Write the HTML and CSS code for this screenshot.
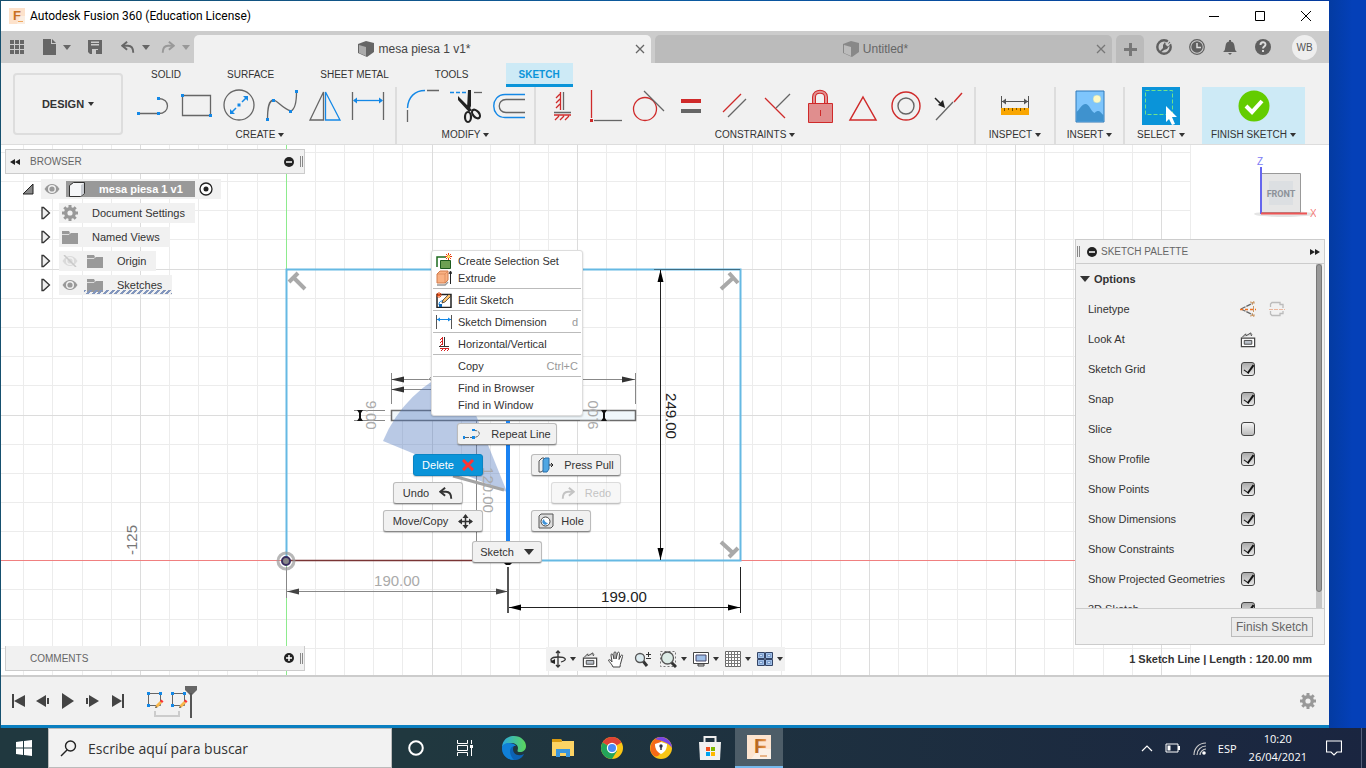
FILE: index.html
```html
<!DOCTYPE html>
<html lang="en">
<head>
  <meta charset="UTF-8">
  <title>Autodesk Fusion 360 (Education License)</title>
  <meta name="viewport" content="width=device-width, initial-scale=1">
  <link rel="stylesheet" href="styles.css">
</head>
<body>
  <!-- shared icons -->
  <svg class="sprite" aria-hidden="true">
    <symbol id="i-eye" viewBox="0 0 16 12"><path d="M0.5 6C3 2 5.500 1 8 1s5 1 7.500 5C13 10 10.500 11 8 11S3 10 .5 6z" fill="#999"/><circle cx="8" cy="6" r="4" fill="#f1f1f1"/><circle cx="8" cy="6" r="2.600" fill="#999"/></symbol>
    <symbol id="i-folder" viewBox="0 0 16 13"><path d="M0 0h7l1 2h8v11H0z" fill="#999"/><path d="M0 3.500h7l1.500-1.500" stroke="#ddd" fill="none"/></symbol>
    <symbol id="i-gear" viewBox="0 0 16 16"><circle cx="8" cy="8" r="4.300" fill="none" stroke="#999" stroke-width="3.400"/><path d="M8 0v3M8 13v3M0 8h3M13 8h3M2.300 2.300l2.200 2.200M11.500 11.500l2.200 2.200M2.300 13.700l2.200-2.200M11.500 4.500l2.200-2.200" stroke="#999" stroke-width="3"/></symbol>
    <symbol id="i-tri" viewBox="0 0 10 14"><path d="M1 1.500h1.500L8.500 7l-6 5.500H1z" fill="#eee" stroke="#333" stroke-width="1.300"/></symbol>
    <symbol id="i-undo" viewBox="0 0 16 14"><path d="M2 5h6c4 0 6 3 6 8" fill="none" stroke="currentColor" stroke-width="2.200"/><path d="M7 .5L1.500 5 7 9.500" fill="none" stroke="currentColor" stroke-width="2.200"/></symbol>
    <symbol id="i-lookat" viewBox="0 0 18 18"><path d="M1.500 7.500h14v9h-14z" fill="#fff" stroke="#444" stroke-width="1.300"/><path d="M4.500 10h8v4h-8z" fill="#b9c0c9" stroke="#444"/><path d="M2 7l4-4 .5 2 5-3 .5 3 1-1" fill="#ccc" stroke="#444"/></symbol>
    <symbol id="i-feature" viewBox="0 0 18 18"><path d="M2.500 2.500h12v12h-12z" fill="none" stroke="#666"/><path d="M1 1h3v3H1zM13 1h3v3h-3zM1 13h3v3H1z" fill="#1488e6"/><path d="M9 17l1-3 4-4 2 2-4 4z" fill="#f9b74a"/><path d="M14 10l1.500-1.500 2 2L16 12z" fill="#f33"/><path d="M9 17l1-2 1.500 1.500z" fill="#555"/></symbol>
  </svg>

  <div class="desktop">
    <div class="window">
      <header class="titlebar">
        <svg width="16" height="16" viewBox="0 0 16 16"><rect width="16" height="16" fill="#fde2cb"/><path d="M11 8h5v8H8z" fill="#fbeee2"/><text x="4" y="12" font-family="Liberation Sans" font-weight="700" font-size="13" fill="#c9711f">F</text><path d="M9 13h5v1H9z" fill="#f0a860"/></svg>
        <h1 class="title">Autodesk Fusion 360 (Education License)</h1>
        <button class="win-btn" aria-label="Minimize"><svg width="12" height="12"><path d="M1 6.500h10" stroke="#000"/></svg></button>
        <button class="win-btn" aria-label="Maximize"><svg width="12" height="12"><path d="M1.500 1.500h9v9h-9z" fill="none" stroke="#000"/></svg></button>
        <button class="win-btn" aria-label="Close"><svg width="12" height="12"><path d="M1 1l10 10M11 1L1 11" stroke="#000"/></svg></button>
      </header>

      <div class="appbar">
        <div class="quick">
          <button aria-label="Data panel"><svg width="14" height="14"><path d="M0 0h4v4H0zM5 0h4v4H5zM10 0h4v4h-4zM0 5h4v4H0zM5 5h4v4H5zM10 5h4v4h-4zM0 10h4v4H0zM5 10h4v4H5zM10 10h4v4h-4z" fill="#666"/></svg></button>
          <button class="wide" aria-label="File"><svg width="13" height="16"><path d="M0 0h8v5h5v11H0zM9 0l4 4H9z" fill="#666"/></svg><span class="caret"></span></button>
          <button aria-label="Save"><svg width="14" height="14"><path d="M0 0h14v14H2l-2-2z" fill="#666"/><path d="M3 1.500h8v4H3zM4 9h6v5H4z" fill="#ccc"/><path d="M8 10h2v4H8zM3 3h8v1H3z" fill="#666"/></svg></button>
          <button class="wide" aria-label="Undo"><svg width="14" height="13"><use href="#i-undo"/></svg><span class="caret"></span></button>
          <button class="wide faded" aria-label="Redo"><svg class="flip" width="14" height="13"><use href="#i-undo"/></svg><span class="caret"></span></button>
        </div>
        <div class="docs">
          <div class="doc active">
            <span class="doc-name"><svg width="16" height="16" viewBox="0 0 16 16"><path d="M0 3l8-3 8 2v9l-7 5-9-4z" fill="#666"/><path d="M1 4l7 2v9l-7-3z" fill="#ababab"/></svg>mesa piesa 1 v1*</span>
            <button aria-label="Close tab"><svg width="10" height="10"><path d="M1 1l8 8M9 1L1 9" stroke="#666" stroke-width="1.300"/></svg></button>
          </div>
          <div class="doc">
            <span class="doc-name"><svg width="16" height="16" viewBox="0 0 16 16"><path d="M0 3l8-3 8 2v9l-7 5-9-4z" fill="#888"/><path d="M1 4l7 2v9l-7-3z" fill="#bbb"/></svg>Untitled*</span>
            <button aria-label="Close tab"><svg width="10" height="10"><path d="M1 1l8 8M9 1L1 9" stroke="#777" stroke-width="1.300"/></svg></button>
          </div>
          <button class="doc-add" aria-label="New tab"><svg width="13" height="13"><path d="M6.500 0v13M0 6.500h13" stroke="#777" stroke-width="3"/></svg></button>
        </div>
        <div class="account">
          <button aria-label="Extensions"><svg width="16" height="16"><circle cx="8" cy="8" r="6.700" fill="none" stroke="#5f5f5f" stroke-width="2.400"/><path d="M3 13l4-4V6l2-3 1 3 3 1-2 3-3 1-4 3z" fill="#5f5f5f"/><path d="M10 6l4-5M11 7l5-4" stroke="#ccc" stroke-width="1.300"/></svg></button>
          <button aria-label="Job status"><svg width="16" height="16"><circle cx="8" cy="8" r="7.300" fill="none" stroke="#5f5f5f" stroke-width="1.200"/><circle cx="8" cy="8" r="5.700" fill="#5f5f5f"/><path d="M8 4v4.500h4" stroke="#ddd" stroke-width="1.500" fill="none"/></svg></button>
          <button aria-label="Notifications"><svg width="16" height="16"><path d="M1 13c2-1 2-3 2.500-6C4 4 5 3 7 2.500V1h2v1.500c2 .5 3 1.500 3.500 4.500.5 3 .5 5 2.500 6zM6 14h4l-2 2z" fill="#5f5f5f"/></svg></button>
          <button aria-label="Help"><svg width="16" height="16"><circle cx="8" cy="8" r="8" fill="#5f5f5f"/><path d="M5.500 6c0-3.500 5-3.500 5-.5 0 2-2.500 2-2.500 4M8 11v2" stroke="#ddd" stroke-width="1.900" fill="none"/></svg></button>
          <button class="avatar">WB</button>
        </div>
      </div>

      <div class="ribbon">
        <button class="workspace">DESIGN <span class="caret"></span></button>
        <div class="ribbon-main">
          <nav class="ribbon-tabs">
            <a href="#">SOLID</a>
            <a href="#">SURFACE</a>
            <a href="#">SHEET METAL</a>
            <a href="#">TOOLS</a>
            <a href="#" class="active">SKETCH</a>
          </nav>
          <div class="groups">
            <section class="group create">
              <div class="tools">
                <button aria-label="Line"><svg width="36" height="36"><path d="M3.500 25.500h20c12 0 12-15 0-15" fill="none" stroke="#666" stroke-width="1.300"/><path d="M2 24h3v3H2zM22 24h3v3h-3zM22 9h3v3h-3z" fill="#1488e6"/></svg></button>
                <button aria-label="Rectangle"><svg width="36" height="36"><path d="M4.500 7.500h28v20h-28z" fill="none" stroke="#666" stroke-width="1.300"/><path d="M3 6h3v3H3zM31 26h3v3h-3z" fill="#1488e6"/></svg></button>
                <button aria-label="Circle"><svg width="36" height="36"><circle cx="18" cy="17" r="15" fill="none" stroke="#666" stroke-width="1.300"/><path d="M10 25l5-5M21 14l5-5" stroke="#1488e6" stroke-width="1.500"/><path d="M9 26v-5l5 5zM27 8v5l-5-5zM16.500 15.500h3v3h-3z" fill="#1488e6"/></svg></button>
                <button aria-label="Spline"><svg width="36" height="36"><path d="M3.500 32c0-12 1-20 6.500-20 5 2 9 9 17 11 4-2 5.500-8 5.500-19" fill="none" stroke="#666" stroke-width="1.300"/><path d="M2 30h3v3H2zM8 11h3v3H8zM25 22h3v3h-3zM31 2h3v3h-3z" fill="#1488e6"/></svg></button>
                <button aria-label="Mirror"><svg width="36" height="36"><path d="M16.500 4v28H3z" fill="none" stroke="#666" stroke-width="1.300"/><path d="M18.500 4v28H33z" fill="none" stroke="#1488e6" stroke-width="1.300"/></svg></button>
                <button aria-label="Sketch Dimension"><svg width="36" height="36"><path d="M2.500 4v28M33.500 4v28" stroke="#666" stroke-width="1.300"/><path d="M4 12.500h28" stroke="#1488e6" stroke-width="1.300"/><path d="M3 12.500l4-3v6zM33 12.500l-4-3v6z" fill="#1488e6"/></svg></button>
              </div>
              <button class="group-name">CREATE <span class="caret"></span></button>
            </section>
            <section class="group">
              <div class="tools">
                <button aria-label="Fillet"><svg width="36" height="36"><path d="M2.500 20C3 9 10 2.500 20 2.500" fill="none" stroke="#1488e6" stroke-width="1.400"/><path d="M22 2.500h12M2.500 22v12" stroke="#666" stroke-width="1.300"/></svg></button>
                <button aria-label="Trim"><svg width="36" height="36"><path d="M2 4.500h17" stroke="#1488e6" stroke-width="1.500" stroke-dasharray="4 2"/><path d="M26 4.500h8" stroke="#666" stroke-width="1.300"/><path d="M20 2h3v16l-2 5-2-2zM10 8l14 14-3 2-11-12z" fill="#222"/><ellipse cx="20" cy="29" rx="3" ry="5" fill="none" stroke="#222" stroke-width="2.200"/><ellipse cx="28" cy="26" rx="3" ry="5" transform="rotate(-40 28 26)" fill="none" stroke="#222" stroke-width="2.200"/></svg></button>
                <button aria-label="Offset"><svg width="36" height="36"><path d="M34 6.500H14c-15 0-15 23 0 23h20" fill="none" stroke="#1488e6" stroke-width="1.400"/><path d="M34 11.500H15c-9 0-9 13 0 13h19" fill="none" stroke="#666" stroke-width="1.300"/></svg></button>
              </div>
              <button class="group-name">MODIFY <span class="caret"></span></button>
            </section>
            <section class="group">
              <div class="tools">
                <button aria-label="Horizontal/Vertical"><svg width="20" height="30"><path d="M8.500 1v18M8 3L4 7M8 8l-4 4M8 13l-4 4M2 24h17M7 25l-4 4M12 25l-4 4M17 25l-4 4" stroke="#cf2a2a" stroke-width="1.300" fill="none"/><path d="M11.500 1v18M2 21.500h17" stroke="#666" stroke-width="1.300"/></svg></button>
                <button aria-label="Coincident"><svg width="36" height="36"><path d="M4.500 2v28" stroke="#cf2a2a" stroke-width="1.300"/><path d="M3 31h3v3H3z" fill="#cf2a2a"/><path d="M7 32.500h28" stroke="#666" stroke-width="1.300"/></svg></button>
                <button aria-label="Tangent"><svg width="36" height="36"><circle cx="15" cy="21" r="11.500" fill="none" stroke="#cf2a2a" stroke-width="1.300"/><path d="M14 3l20 20" stroke="#666" stroke-width="1.300"/></svg></button>
                <button aria-label="Equal"><svg width="36" height="36"><path d="M8 11h20v4H8z" fill="#cf2a2a"/><path d="M8 21h20v4H8z" fill="#666"/></svg></button>
                <button aria-label="Parallel"><svg width="36" height="36"><path d="M7 24L25 6" stroke="#cf2a2a" stroke-width="1.300"/><path d="M12 29l18-18" stroke="#666" stroke-width="1.300"/></svg></button>
                <button aria-label="Perpendicular"><svg width="36" height="36"><path d="M6 10l20 20" stroke="#cf2a2a" stroke-width="1.300"/><path d="M17 20L31 6" stroke="#666" stroke-width="1.300"/></svg></button>
                <button aria-label="Fix"><svg width="36" height="36"><path d="M12 16V9c0-7 12-7 12 0v7" fill="none" stroke="#cf2a2a" stroke-width="4"/><path d="M12 16V9c0-7 12-7 12 0v7" fill="none" stroke="#e39292" stroke-width="2"/><path d="M6.500 15.500h24v19h-24z" fill="#e08e8e" stroke="#cf2a2a"/><path d="M18.500 22v6" stroke="#cf2a2a"/></svg></button>
                <button aria-label="MidPoint"><svg width="36" height="36"><path d="M18 9l13 23H5z" fill="none" stroke="#cf2a2a" stroke-width="1.500"/></svg></button>
                <button aria-label="Concentric"><svg width="36" height="36"><circle cx="18" cy="18" r="14" fill="none" stroke="#cf2a2a" stroke-width="1.400"/><circle cx="18" cy="18" r="8" fill="none" stroke="#666" stroke-width="1.400"/></svg></button>
                <button aria-label="Collinear"><svg width="36" height="36"><path d="M23 14l8-9" stroke="#cf2a2a" stroke-width="1.400"/><path d="M5 32l17-18" stroke="#666" stroke-width="1.300"/><path d="M4 10l5 5" stroke="#222" stroke-width="1.500"/><path d="M14 20l-7-3 5-5z" fill="#222"/></svg></button>
              </div>
              <button class="group-name">CONSTRAINTS <span class="caret"></span></button>
            </section>
            <section class="group inspect">
              <div class="tools">
                <button aria-label="Measure"><svg width="36" height="36"><path d="M4.500 8v12M31.500 8v12M5 13.500h26" stroke="#555"/><path d="M5 13.500l4-3v6zM31 13.500l-4-3v6z" fill="#555"/><path d="M4 20h28v7H4z" fill="#f9a602"/><path d="M7.500 20v3M11.500 20v2M15.500 20v3M19.500 20v2M23.500 20v3M27.500 20v2" stroke="#7a5200"/></svg></button>
              </div>
              <button class="group-name">INSPECT <span class="caret"></span></button>
            </section>
            <section class="group insert">
              <div class="tools">
                <button aria-label="Canvas"><svg width="36" height="36"><path d="M4 3h28v31H4z" fill="#7ec5fc" stroke="#2f79b8"/><path d="M4.500 24c3-2 5-8 9-8s5 7 9 9c2-2 3-2 4-2 2 0 3 3 5 4v6.500h-27z" fill="#3f92ce"/><circle cx="25" cy="11" r="4" fill="#fdf9c4" stroke="#9cc" stroke-width=".5"/></svg></button>
              </div>
              <button class="group-name">INSERT <span class="caret"></span></button>
            </section>
            <section class="group select">
              <div class="tools">
                <button aria-label="Select"><svg width="38" height="38"><path d="M0 0h38v38H0z" fill="#0a94d9"/><path d="M3.500 3.500h27v24h-27z" fill="none" stroke="#6fe28b" stroke-dasharray="4 2"/><path d="M24 19l11 11h-5l3 7-3 1-3-6-3 3z" fill="#fff"/></svg></button>
              </div>
              <button class="group-name">SELECT <span class="caret"></span></button>
            </section>
            <section class="group finish">
              <div class="tools">
                <button aria-label="Finish Sketch"><svg width="36" height="36"><circle cx="18" cy="18" r="15.500" fill="#63cc00"/><path d="M10 18l6 6 10-11" fill="none" stroke="#fff" stroke-width="4"/></svg></button>
              </div>
              <button class="group-name">FINISH SKETCH <span class="caret"></span></button>
            </section>
          </div>
        </div>
      </div>

      <main class="canvas">
        <!-- sketch drawing, in screen units -->
        <svg class="drawing" width="100%" height="100%">
          <g transform="translate(-1 -145)">
            <path d="M23.500 145v530M52.500 145v530M82.500 145v530M111.500 145v530M169.500 145v530M198.500 145v530M227.500 145v530M257.500 145v530M315.500 145v530M344.500 145v530M373.500 145v530M402.500 145v530M461.500 145v530M490.500 145v530M519.500 145v530M548.500 145v530M606.500 145v530M636.500 145v530M665.500 145v530M694.500 145v530M752.500 145v530M781.500 145v530M811.500 145v530M840.500 145v530M898.500 145v530M927.500 145v530M957.500 145v530M986.500 145v530M1044.500 145v530M1073.500 145v530M1103.500 145v530M1132.500 145v530M1190.500 145v530M1 152.500h1190M1 181.500h1190M1 210.500h1190M1 239.500h1190M1 298.500h1190M1 327.500h1190M1 356.500h1190M1 385.500h1190M1 444.500h1190M1 473.500h1190M1 502.500h1190M1 531.500h1190M1 589.500h1190M1 619.500h1190M1 648.500h1190" stroke="#ececec"/>
            <path d="M140.500 145v530M432.500 145v530M577.500 145v530M723.500 145v530M869.500 145v530M1015.500 145v530M1161.500 145v530M1 269.500h1190M1 415.500h1190" stroke="#dcdcdc"/>
            <path d="M286.500 145v530" stroke="#8deb8d"/>
            <path d="M1 560.500h1190" stroke="#f08080"/>
            <path d="M286.500 560V269.500h454v291h-232" fill="none" stroke="#66b9e3" stroke-width="2"/>
            <path d="M286 560.500h222" stroke="#7a3434" stroke-width="1.500"/>

            <path d="M391.500 410.500h244v10h-244z" fill="#f0f7fb" stroke="#6b6b6b" stroke-width="1.500"/>
            <path d="M391.500 373v31M635.500 373v31M391 379.500h244M391 389.500h60M354 410.500h31M354 420.500h31M580 410.500h30M580 420.500h30M476.500 421v125" fill="none" stroke="#888"/>
            <path d="M391 379.500l13-3v6zM391 389.500l13-3v6zM635 379.500l-13-3v6z" fill="#333"/>
            <path d="M428 380l3-3v4" fill="none" stroke="#aaa"/>
            <path d="M357 410h6l-2 3v5l2 3h-6l2-3v-5zM601 410h6l-2 3v5l2 3h-6l2-3v-5z" fill="#111"/>
            <path d="M507 492L383 441A134 134 0 0 1 457 368z" fill="#5078be" fill-opacity=".4"/>
            <path d="M453 476l51 14" stroke="#a4a4a4" stroke-width="3"/>
            <path d="M508 421v139" stroke="#1a82f2" stroke-width="4"/>
            <path d="M503 562h10l-3 3h-4z" fill="#111"/>

            <path d="M286.500 567v31M287 591.500h221" stroke="#888"/>
            <path d="M287 591.500l12-3v6zM508 591.500l-12-3v6z" fill="#444"/>
            <path d="M508 567v46" stroke="#555" stroke-width="2"/>
            <path d="M740.500 567v46M509 607.500h231M660.500 270v290" stroke="#222"/>
            <path d="M654 269.500h86" stroke="#3f6c82"/>
            <path d="M509 607.500l12-3v6zM740 607.500l-12-3v6zM660.500 270l-3 12h6zM660.500 560l-3-12h6z" fill="#000"/>

            <g stroke="#a9a9a9" stroke-width="4"><path d="M289 282l9-9M294 278l11 11M729 273l9 10M733 278l-12 11M729 557l9-9M733 553l-12-11" fill="none"/></g>
            <circle cx="286" cy="561" r="8" fill="none" stroke="#999" stroke-width="3" opacity=".7"/>
            <circle cx="286" cy="561" r="4" fill="#888" stroke="#3a2f60" stroke-width="2"/>

            <g class="dims">
              <text x="397" y="586" class="soft">190.00</text>
              <text x="624" y="602">199.00</text>
              <text transform="translate(666 416) rotate(90)">249.00</text>
              <text transform="translate(483 490) rotate(90)" class="soft">120.00</text>
              <text transform="translate(366 415) rotate(90)" class="soft">9.00</text>
              <text transform="translate(598 415) rotate(-90)" class="soft">9.00</text>
              <text transform="translate(137 540) rotate(-90)" class="axis">-125</text>
            </g>
          </g>
        </svg>

        <section class="browser">
          <header class="panel-head">
            <svg width="12" height="8"><path d="M5 1v6L0 4zM10 1v6L5 4z" fill="#222"/></svg>
            <h2>BROWSER</h2>
            <svg width="10" height="10"><circle cx="5" cy="5" r="5" fill="#222"/><path d="M2 5h6" stroke="#fff" stroke-width="1.500"/></svg>
            <span class="grip"></span>
          </header>
          <ul class="tree">
            <li class="root">
              <svg width="12" height="12"><path d="M11 1v10H1z" fill="#888" stroke="#222"/></svg>
              <span class="node"><svg width="16" height="12"><use href="#i-eye"/></svg><b class="root-name"><svg width="18" height="16"><path d="M1.500 4.500l4-3h11v11l-4 3h-11z" fill="#f5f6f8" stroke="#333"/><path d="M13 4v11l3-3V2z" fill="#c9ccd2"/></svg>mesa piesa 1 v1</b><svg width="14" height="14"><circle cx="7" cy="7" r="6" fill="#fff" stroke="#222" stroke-width="1.300"/><circle cx="7" cy="7" r="2.500" fill="#222"/></svg></span>
            </li>
            <li><svg width="10" height="14"><use href="#i-tri"/></svg><span class="node"><svg width="16" height="16"><use href="#i-gear"/></svg><span class="label">Document Settings</span></span></li>
            <li><svg width="10" height="14"><use href="#i-tri"/></svg><span class="node"><svg width="16" height="13"><use href="#i-folder"/></svg><span class="label">Named Views</span></span></li>
            <li><svg width="10" height="14"><use href="#i-tri"/></svg><span class="node"><svg class="off" width="16" height="12"><use href="#i-eye"/><path d="M2 0l12 12" stroke="#555" stroke-width="1.500"/></svg><svg class="second" width="16" height="13"><use href="#i-folder"/></svg><span class="label">Origin</span></span></li>
            <li><svg width="10" height="14"><use href="#i-tri"/></svg><span class="node"><svg width="16" height="12"><use href="#i-eye"/></svg><span class="hatched"><svg class="second" width="16" height="13"><use href="#i-folder"/></svg><span class="label">Sketches</span></span></span></li>
          </ul>
        </section>

        <svg class="viewcube" width="64" height="66">
          <ellipse cx="32" cy="59" rx="30" ry="3" fill="#e4e4e4"/>
          <path d="M9.500 18.500h39v39h-39z" fill="#e6e6e6" stroke="#999"/>
          <path d="M17 26h24v24H17z" fill="#dcdfe2"/>
          <path d="M9 12v47" stroke="#6666ee" stroke-width="2"/>
          <path d="M9 58.500h46" stroke="#ee5555" stroke-width="2"/>
          <text x="29" y="42" text-anchor="middle" class="face">FRONT</text>
          <text x="5" y="10" fill="#7c7cf5">Z</text>
          <text x="58" y="62" fill="#f57c7c">X</text>
        </svg>

        <section class="palette">
          <header class="panel-head">
            <span class="grip"></span>
            <svg width="10" height="10"><circle cx="5" cy="5" r="5" fill="#222"/><path d="M2 5h6" stroke="#fff" stroke-width="1.500"/></svg>
            <h2>SKETCH PALETTE</h2>
            <svg width="12" height="8"><path d="M2 1v6l5-3zM7 1v6l5-3z" fill="#222"/></svg>
          </header>
          <div class="palette-body">
            <h3><span class="caret big"></span>Options</h3>
            <div class="option"><span>Linetype</span>
              <button aria-label="Construction"><svg width="16" height="16"><path d="M1 8L13 2M1 8l12 6" stroke="#666" stroke-width="1.300" stroke-dasharray="5 1"/><path d="M0 8.500h16" stroke="#f07020" stroke-dasharray="3 2" stroke-width="1.500"/><path d="M10 1l5 1M14 0l-2 4M10 15l5-1M14 16l-2-4M13.500 5v6" stroke="#c96"/></svg></button>
              <button class="line-second" aria-label="Centerline"><svg width="16" height="16"><path d="M1.500 6V3l1.500-1.500h8v2h3V7M1.500 10v3L3 14.500h8v-2h3V10" fill="none" stroke="#bbb" stroke-width="1.300"/><path d="M0 8.500h16" stroke="#eab8a0" stroke-dasharray="4 1"/></svg></button>
            </div>
            <div class="option"><span>Look At</span><button aria-label="Look At"><svg width="17" height="17"><use href="#i-lookat"/></svg></button></div>
            <div class="option"><label for="o1">Sketch Grid</label><input type="checkbox" id="o1" checked></div>
            <div class="option"><label for="o2">Snap</label><input type="checkbox" id="o2" checked></div>
            <div class="option"><label for="o3">Slice</label><input type="checkbox" id="o3"></div>
            <div class="option"><label for="o4">Show Profile</label><input type="checkbox" id="o4" checked></div>
            <div class="option"><label for="o5">Show Points</label><input type="checkbox" id="o5" checked></div>
            <div class="option"><label for="o6">Show Dimensions</label><input type="checkbox" id="o6" checked></div>
            <div class="option"><label for="o7">Show Constraints</label><input type="checkbox" id="o7" checked></div>
            <div class="option"><label for="o8">Show Projected Geometries</label><input type="checkbox" id="o8" checked></div>
            <div class="option"><label for="o9">3D Sketch</label><input type="checkbox" id="o9" checked></div>
            <div class="scroll"><div class="thumb"></div></div>
          </div>
          <footer class="palette-foot"><button>Finish Sketch</button></footer>
        </section>

        <!-- marking menu -->
        <button class="mark m-repeat"><svg width="18" height="12"><path d="M2 9.500h8c8 0 8-7 2-7" fill="none" stroke="#666" stroke-dasharray="4 1"/><path d="M0 8h2v3H0zM9 8h3v3H9zM9 1h3v2H9z" fill="#1488e6"/></svg>Repeat Line</button>
        <button class="mark m-delete">Delete<svg width="12" height="12"><path d="M1 1l10 10M11 1L1 11" stroke="#f33" stroke-width="3"/></svg></button>
        <button class="mark m-undo">Undo<svg width="14" height="13"><use href="#i-undo"/></svg></button>
        <button class="mark m-move">Move/Copy<svg width="15" height="15"><path d="M7.500 1v13M1 7.500h13" stroke="#333" stroke-width="1.500"/><path d="M7.500 0l3 4h-6zM7.500 15l3-4h-6zM0 7.500l4-3v6zM15 7.500l-4-3v6z" fill="#333"/></svg></button>
        <button class="mark m-press"><svg width="16" height="16"><path d="M1 4l3-3h2v12l-3 2H1z" fill="#eee" stroke="#555"/><path d="M5 3l2-2h4v11l-2 3H5z" fill="#4fa6e3" stroke="#2c6fa8"/><path d="M11 8h4M13 6l2 2-2 2" stroke="#222" fill="none"/></svg>Press Pull</button>
        <button class="mark m-redo" disabled><svg class="flip" width="14" height="13"><use href="#i-undo"/></svg>Redo</button>
        <button class="mark m-hole"><svg width="16" height="16"><path d="M1 3l2-2h12v12l-2 2H1z" fill="#ddd" stroke="#555"/><circle cx="7.500" cy="8.500" r="4.500" fill="#fff" stroke="#444"/><path d="M6 6a3 3 0 1 0 4 4c-2 0-4-2-4-4z" fill="#3f92d8"/></svg>Hole</button>
        <button class="mark m-sketch">Sketch<span class="caret big"></span></button>

        <!-- context menu -->
        <ul class="context">
          <li><button><svg width="16" height="16"><path d="M1 14V4h9" fill="none" stroke="#1d6b1d" stroke-width="1.500"/><path d="M4.500 7.500h10v8h-10z" fill="#6da052" stroke="#1d5b1d"/><path d="M12.500 0v7M9 3.500h7M10 1l5 5M15 1l-5 5" stroke="#e63c10"/><circle cx="12.500" cy="3.500" r="1.500" fill="#fe6"/></svg>Create Selection Set</button></li>
          <li><button><svg width="16" height="16"><path d="M1 4l3-3h8v9l-3 3H1z" fill="#f9b183" stroke="#d27c4c"/><path d="M9 4v9M1 4h8l3-3" fill="none" stroke="#d27c4c" stroke-width=".6"/><path d="M1 15h8l3-3" fill="none" stroke="#999" stroke-width="1.500"/><path d="M14.500 2v12M13 4l1.500-3L16 4" stroke="#222" fill="none"/></svg>Extrude</button></li>
          <li class="rule"><button><svg width="16" height="16"><path d="M1 2.500h14v13H1z" fill="#fff" stroke="#222" stroke-width="1.500"/><path d="M3 13c0-6 4-2 10-8" fill="none" stroke="#1488e6"/><path d="M6 11l1-3 6-6 2 2-6 6z" fill="#fbc06a" stroke="#222" stroke-width=".7"/><path d="M3 0v6M0 3h6M1 1l4 4M5 1L1 5" stroke="#e64a10"/><path d="M3 12h3v3H3z" fill="#0a66b8"/></svg>Edit Sketch</button></li>
          <li class="rule"><button><svg width="16" height="16"><path d="M.5 1v14M15.500 1v14" stroke="#555"/><path d="M1 5.500h14" stroke="#1488e6"/><path d="M1 5.500l3-2v4zM15 5.500l-3-2v4z" fill="#1488e6"/></svg>Sketch Dimension<kbd>d</kbd></button></li>
          <li class="rule"><button><svg width="16" height="16"><path d="M6.500 1v8M6 2L4 4M6 5L4 7M6 8l-2 2M4 12.500h9M7 13l-2 2M10 13l-2 2M13 13l-2 2" stroke="#d61f1f" fill="none"/><path d="M8.500 1v9M3 10.500h10" stroke="#333"/></svg>Horizontal/Vertical</button></li>
          <li class="rule"><button class="plain">Copy<kbd>Ctrl+C</kbd></button></li>
          <li class="rule"><button class="plain">Find in Browser</button></li>
          <li><button class="plain">Find in Window</button></li>
        </ul>

        <section class="comments panel-head">
          <h2>COMMENTS</h2>
          <svg width="10" height="10"><circle cx="5" cy="5" r="5" fill="#222"/><path d="M2 5h6M5 2v6" stroke="#fff" stroke-width="1.500"/></svg>
          <span class="grip"></span>
        </section>

        <div class="navbar">
          <button aria-label="Orbit"><svg width="16" height="18"><path d="M8 1v16M6 3l2-2 2 2M6 15l2 2 2-2" fill="none" stroke="#333" stroke-width="1.300"/><path d="M4 12C-1 11 0 7 8 7s10 3 3 5" fill="none" stroke="#333" stroke-width="1.300"/><path d="M0 12l5-3v5z" fill="#222"/></svg><span class="caret"></span></button>
          <button aria-label="Look At"><svg width="17" height="17"><use href="#i-lookat"/></svg></button>
          <button aria-label="Pan"><svg width="17" height="17"><path d="M5 16c-1-3-4-5-4.500-7 1-1 2 0 3.500 2L3 4c0-1.500 1.500-1.500 2 0l1 4V2c0-1.500 2-1.500 2 0v6l1.500-6c.5-1.500 2-1 2 .5L11 8.500 13 4.500c1-1 2-.5 1.500 1L13 11c-.5 2-1 3-1 5z" fill="#fff" stroke="#444"/></svg></button>
          <button aria-label="Zoom"><svg width="17" height="17"><path d="M9 10l4 5" stroke="#333" stroke-width="3"/><circle cx="6" cy="7" r="4.500" fill="#dcebf0" stroke="#555" stroke-width="1.300"/><path d="M12 3.500h5M14.500 1v5M12 7.500h5" stroke="#333"/></svg></button>
          <button aria-label="Fit"><svg width="17" height="17"><path d="M.5.500h15v15H.5z" fill="none" stroke="#777" stroke-dasharray="2 2"/><path d="M11 11l5 5" stroke="#333" stroke-width="3"/><circle cx="7.500" cy="7" r="6" fill="#dcebe6" stroke="#555" stroke-width="1.300"/></svg><span class="caret"></span></button>
          <button aria-label="Display"><svg width="16" height="16"><path d="M.5 1.500h15v11H.5z" fill="#fff" stroke="#444"/><path d="M3 4h10v6H3z" fill="#9fbfe8" stroke="#446"/><path d="M5 13h6v2H5z" fill="#ddd" stroke="#444"/></svg><span class="caret"></span></button>
          <button aria-label="Grid"><svg width="16" height="16"><path d="M.5.500h15v15H.5z" fill="#fff" stroke="#666"/><path d="M3.500 0v16M6.500 0v16M9.500 0v16M12.500 0v16M0 3.500h16M0 6.500h16M0 9.500h16M0 12.500h16" stroke="#777"/></svg><span class="caret"></span></button>
          <button aria-label="Viewports"><svg width="16" height="14"><path d="M.5.500h7v6h-7zM8.500.500h7v6h-7zM.5 7.500h7v6h-7zM8.500 7.500h7v6h-7z" fill="#9fbfe8" stroke="#346"/><path d="M2.500 2.500h3v2h-3zM10.500 2.500h3v2h-3zM2.500 9.500h3v2h-3zM10.500 9.500h3v2h-3z" fill="#cfe0f5" stroke="#68b" stroke-width=".7"/></svg><span class="caret"></span></button>
        </div>
        <p class="status">1 Sketch Line | Length : 120.00 mm</p>
      </main>

      <footer class="timeline">
        <button aria-label="To start"><svg width="14" height="14"><path d="M2 0v14" stroke="#444" stroke-width="2"/><path d="M14 1v12L3 7z" fill="#444"/></svg></button>
        <button aria-label="Step back"><svg width="14" height="14"><path d="M10 1v12L0 7z" fill="#444"/><path d="M12 4v6" stroke="#444" stroke-width="2"/></svg></button>
        <button aria-label="Play"><svg width="14" height="16"><path d="M1 0v16l12-8z" fill="#444"/></svg></button>
        <button aria-label="Step forward"><svg width="14" height="14"><path d="M3 1v12l10-6z" fill="#444"/><path d="M1 4v6" stroke="#444" stroke-width="2"/></svg></button>
        <button aria-label="To end"><svg width="14" height="14"><path d="M12 0v14" stroke="#444" stroke-width="2"/><path d="M1 1v12l10-6z" fill="#444"/></svg></button>
        <svg class="features" width="52" height="34">
          <use href="#i-feature" x="0" y="7" width="18" height="18"/>
          <use href="#i-feature" x="24" y="7" width="18" height="18"/>
          <path d="M9 27v5h24v-5" fill="none" stroke="#ccc" stroke-width="2"/>
          <path d="M39 2h12v4l-5 5h-2l-5-5z" fill="#666"/><path d="M45 9v25" stroke="#555" stroke-width="2"/>
        </svg>
        <button class="settings" aria-label="Settings"><svg width="16" height="16"><use href="#i-gear"/></svg></button>
      </footer>
    </div>
  </div>

  <div class="taskbar">
    <button class="start" aria-label="Inicio"><svg width="16" height="16"><path d="M0 2l7-1v6.500H0zM8 1l8-1v7.500H8zM0 8.500h7V15l-7-1zM8 8.500h8V16l-8-1z" fill="#fff"/></svg></button>
    <label class="search"><svg width="17" height="17"><circle cx="10.500" cy="6" r="5" fill="none" stroke="#222" stroke-width="1.400"/><path d="M7 10l-6 6" stroke="#222" stroke-width="1.400"/></svg><input type="text" placeholder="Escribe aquí para buscar" aria-label="Buscar"></label>
    <div class="apps">
      <button aria-label="Cortana"><svg width="16" height="16"><circle cx="8" cy="8" r="6.800" fill="none" stroke="#fff" stroke-width="2"/></svg></button>
      <button aria-label="Vista de tareas"><svg width="16" height="16"><path d="M.5 0v3.500h10V0M.5 16v-3.500h10V16M.5 5.500h10v5H.5zM14.500 0v4M14.500 8v8" fill="none" stroke="#fff"/><path d="M13 5h3v3h-3z" fill="#fff"/></svg></button>
      <button aria-label="Edge"><svg width="24" height="24"><defs><linearGradient id="ed"><stop offset="0" stop-color="#2aa9e0"/><stop offset="1" stop-color="#5bd65a"/></linearGradient></defs><path d="M0 12a12 12 0 0 0 12 12c5 0 8-2 10-6-6 3-11 0-11-5 0-3 2-4 2-4L6 8z" fill="#0c62b4"/><path d="M0 12C0 4 6 0 12 0c7 0 12 5 12 10 0 4-3 6-6 6-4 0-2-2-2-4 0-3-3-5-7-5-5 0-9 3-9 5z" fill="url(#ed)"/><path d="M0 12c0-3 3-5 7-5 3 0 6 1 7 3-7-1-8 8-2 14C5 24 0 19 0 12z" fill="#1080d8"/></svg></button>
      <button aria-label="Explorador"><svg width="22" height="20"><path d="M0 1h9l1 2h12v15H0z" fill="#fcd364"/><path d="M0 1h9l1 3H0z" fill="#d99a10"/><path d="M4 19v-8h14v8h-4v-4H8v4z" fill="#3a96dd"/></svg></button>
      <button aria-label="Chrome"><svg width="24" height="24"><circle cx="12" cy="12" r="11" fill="#fbc615"/><path d="M12 12L2.500 6.500A11 11 0 0 1 21.500 6.500z" fill="#df4335"/><path d="M12 12L2.500 6.500A11 11 0 0 0 12 23l5-8z" fill="#23a55a"/><circle cx="12" cy="12" r="5.200" fill="#fff"/><circle cx="12" cy="12" r="4" fill="#4a8af4"/></svg></button>
      <button aria-label="Navegador privado"><svg width="24" height="24"><circle cx="12" cy="12" r="11" fill="#f9c616"/><path d="M12 1a11 11 0 0 0-7 19c5 2 7-3 7-8z" fill="#f56a17"/><path d="M6 3a11 11 0 0 1 17 9c-3-5-9-7-17-9z" fill="#7a45e8"/><path d="M6 8l6-2 6 2c0 5-2 8-6 10-4-2-6-5-6-10z" fill="#fff"/><path d="M12 10v4" stroke="#334" stroke-width="1.500"/><circle cx="12" cy="10" r="1.700" fill="#334"/></svg></button>
      <button aria-label="Store"><svg width="24" height="24"><path d="M6.500 6V1h11v5" fill="none" stroke="#eee" stroke-width="2"/><path d="M1 6h22l-1 18H2z" fill="#f2f2f2"/><path d="M8 11h4v4H8z" fill="#f25022"/><path d="M13 11h4v4h-4z" fill="#7fba00"/><path d="M8 16h4v4H8z" fill="#00a4ef"/><path d="M13 16h4v4h-4z" fill="#ffb900"/></svg></button>
      <button class="running" aria-label="Fusion 360"><svg width="24" height="24"><defs><linearGradient id="fu"><stop offset="0" stop-color="#a85a1c"/><stop offset="1" stop-color="#ee9a48"/></linearGradient></defs><rect width="24" height="24" fill="#fde4cf"/><path d="M12 14h12v10H4z" fill="#fbf0e6"/><text x="7" y="18" font-family="Liberation Sans" font-weight="700" font-size="21" fill="url(#fu)">F</text><path d="M13 20h7v2h-7z" fill="#e8b488"/></svg></button>
    </div>
    <div class="tray">
      <button aria-label="Iconos ocultos"><svg width="12" height="8"><path d="M1 7l5-5 5 5" fill="none" stroke="#fff" stroke-width="1.200"/></svg></button>
      <button aria-label="Batería"><svg width="16" height="10"><path d="M1 1h12v8H1z" fill="none" stroke="#fff"/><path d="M2.500 2.500h3v5h-3zM13 3h2v4h-2z" fill="#fff"/></svg></button>
      <button aria-label="Red"><svg width="13" height="13"><path d="M1 13C1 6 6 1 13 1M4 13c0-5 4-9 9-9M7 13c0-3 3-6 6-6" fill="none" stroke="#ccc" stroke-width="1.200"/><circle cx="11" cy="11" r="1.800" fill="#fff"/></svg></button>
      <button class="lang">ESP</button>
      <button class="clock">10:20<br>26/04/2021</button>
      <button class="notes" aria-label="Notificaciones"><svg width="16" height="16"><path d="M.5 1h15v11H11l-3 3-3-3H.5z" fill="none" stroke="#fff" stroke-width="1.200"/></svg></button>
    </div>
  </div>
</body>
</html>
```
FILE: styles.css
```css
* {
  box-sizing: border-box;
}
body {
  margin: 0;
  height: 100vh;
  display: flex;
  flex-direction: column;
  overflow: hidden;
  font-family: "Liberation Sans", Arial, sans-serif;
  font-size: 11px;
  color: #333;
}
button {
  border: 0;
  padding: 0;
  background: none;
  color: inherit;
  font: inherit;
  display: flex;
  align-items: center;
  justify-content: center;
}
a {
  color: inherit;
  text-decoration: none;
}
h1, h2, h3, p, ul {
  margin: 0;
  padding: 0;
  font-weight: 400;
  font-size: inherit;
  list-style: none;
}
svg {
  display: block;
  flex: none;
}
.sprite {
  position: absolute;
  width: 0;
  height: 0;
}
.flip {
  transform: scaleX(-1);
}
.caret {
  display: inline-block;
  border: 3px solid transparent;
  border-top: 4px solid #333;
  border-bottom: 0;
}
.caret.big {
  border-width: 6px 5px 0;
}

/* desktop and window */
.desktop {
  flex: 1;
  min-height: 0;
  display: flex;
  padding: 1px 37px 3px 1px;
  background: linear-gradient(90deg, #16506f 0, #0b5aa0 50%, #033a9e 97%, #0440b8 99%);
}
.window {
  flex: 1;
  min-width: 0;
  display: flex;
  flex-direction: column;
  background: #fff;
  box-shadow: 0 3px 0 #0a7fc0;
}
.titlebar {
  height: 30px;
  display: flex;
  align-items: center;
  padding-left: 8px;
}
.title {
  flex: 1;
  margin-left: 5px;
  font-family: Roboto, "Open Sans", sans-serif;
  font-size: 12px;
  color: #000;
}
.win-btn {
  width: 46px;
  height: 30px;
}

/* app bar */
.appbar {
  height: 32px;
  display: flex;
  background: #ccc;
}
.quick {
  width: 193px;
  display: flex;
  align-items: center;
  padding-left: 9px;
  gap: 19px;
  color: #666;
}
.quick .wide {
  gap: 7px;
}
.quick .caret {
  border-width: 5px 4px 0;
  border-top-color: #666;
  margin-right: -2px;
}
.quick .faded {
  opacity: 0.5;
  margin-left: -6px;
}
.docs {
  flex: 1;
  display: flex;
  gap: 4px;
  padding-top: 4px;
}
.doc {
  flex: 1;
  display: flex;
  align-items: center;
  padding-right: 6px;
  border-radius: 5px 5px 0 0;
  background: #bbb;
  color: #666;
  font-size: 12px;
}
.doc.active {
  background: #f1f1f1;
  color: #444;
}
.doc-name {
  flex: 1;
  display: flex;
  justify-content: center;
  align-items: center;
  gap: 4px;
}
.doc-add {
  width: 28px;
  border-radius: 5px 5px 0 0;
  background: #bbb;
}
.account {
  width: 185px;
  display: flex;
  align-items: center;
  gap: 17px;
  padding-left: 12px;
}
.avatar {
  width: 25px;
  height: 25px;
  border-radius: 50%;
  background: #eee;
  color: #555;
  font-size: 10px;
  margin-left: 4px;
}

/* ribbon */
.ribbon {
  height: 82px;
  display: flex;
  background: #f1f1f1;
  border-bottom: 1px solid #ddd;
}
.workspace {
  width: 110px;
  height: 62px;
  margin: 10px 6px 0 12px;
  gap: 4px;
  border: 2px solid #ddd;
  border-radius: 4px;
  font-weight: 700;
}
.ribbon-main {
  flex: 1;
  display: flex;
  flex-direction: column;
}
.ribbon-tabs {
  display: flex;
  gap: 20px;
  padding-left: 9px;
  font-size: 10px;
}
.ribbon-tabs a {
  height: 24px;
  line-height: 23px;
  padding: 0 13px;
}
.ribbon-tabs .active {
  margin-left: 4px;
  background: #cdeaf6;
  color: #0a94d9;
  font-weight: 700;
  border-bottom: 3px solid #0a94d9;
}
.groups {
  flex: 1;
  display: flex;
}
.group {
  display: flex;
  flex-direction: column;
  align-items: center;
  padding: 0 4px;
  border-left: 2px solid #ddd;
}
.group.create {
  padding: 0 6px 0 2px;
  border-left: 0;
}
.tools {
  display: flex;
  height: 38px;
}
.tools button {
  width: 43px;
}
.group-name {
  height: 19px;
  gap: 3px;
  font-size: 10px;
}
.inspect {
  width: 80px;
}
.insert {
  width: 69px;
}
.select {
  width: 74px;
}
.finish {
  width: 103px;
  margin-left: 5px;
  border: 0;
  background: #cdeaf6;
}

/* canvas */
.canvas {
  flex: 1;
  min-height: 0;
  position: relative;
  overflow: hidden;
  background: #fff;
}
.drawing {
  position: absolute;
  left: 0;
  top: 0;
}
.dims text {
  font-size: 15px;
  fill: #222;
  text-anchor: middle;
}
.dims .soft {
  fill: #aaa;
}
.dims .axis {
  fill: #777;
}
.panel-head {
  height: 25px;
  display: flex;
  align-items: center;
  padding: 0 1px 0 4px;
  background: #f1f1f1;
  border: 1px solid #ccc;
  color: #666;
  font-size: 10px;
}
.panel-head h2 {
  flex: 1;
}
.grip {
  width: 3px;
  height: 11px;
  border: 1px solid #888;
  border-width: 0 1px;
  margin-left: 6px;
}
.browser {
  position: absolute;
  left: 4px;
  top: 4px;
  width: 300px;
}
.browser h2 {
  margin-left: 8px;
}
.tree {
  padding-top: 3px;
}
.tree li {
  height: 24px;
  display: flex;
  align-items: center;
  padding-left: 36px;
  gap: 8px;
}
.tree .root {
  padding-left: 17px;
  gap: 7px;
}
.node {
  height: 20px;
  display: flex;
  align-items: center;
  padding: 0 10px 0 3px;
  background: #f1f1f1;
}
.root .node {
  padding: 0 8px 0 3px;
}
.root-name {
  height: 16px;
  display: flex;
  align-items: center;
  gap: 13px;
  margin: 0 4px 0 6px;
  padding: 0 12px 0 2px;
  background: #999;
  color: #fff;
}
.label {
  margin-left: 14px;
}
.off {
  opacity: 0.25;
}
.second {
  margin-left: 9px;
}
.hatched {
  display: flex;
  align-items: center;
  position: relative;
}
.hatched::after {
  content: '';
  position: absolute;
  left: 6px;
  right: -10px;
  bottom: -2px;
  height: 4px;
  background: repeating-linear-gradient(135deg, #8296bd 0 2px, transparent 2px 4px);
}
.viewcube {
  position: absolute;
  right: 13px;
  top: 10px;
  font-size: 10px;
}
.face {
  font-family: Roboto, sans-serif;
  font-size: 9px;
  font-weight: 700;
  fill: #8d9299;
}

/* sketch palette */
.palette {
  position: absolute;
  right: 4px;
  top: 94px;
  width: 250px;
  border: 1px solid #ccc;
  background: #f1f1f1;
}
.palette .panel-head {
  height: 24px;
  border-width: 0 0 1px;
  padding: 0 4px 0 0;
}
.palette .grip {
  margin: 0 7px 0 1px;
}
.palette h2 {
  margin-left: 4px;
}
.palette-body {
  position: relative;
  height: 344px;
  overflow: hidden;
}
.palette h3 {
  height: 30px;
  display: flex;
  align-items: center;
  gap: 4px;
  padding-left: 4px;
  font-weight: 700;
}
.option {
  height: 30px;
  display: flex;
  align-items: center;
  padding-left: 12px;
}
.option > :first-child {
  width: 152px;
}
.option .line-second {
  margin-left: 13px;
}
.option input {
  appearance: none;
  position: relative;
  width: 14px;
  height: 14px;
  margin: 0 1px;
  border: 1px solid #444;
  border-radius: 3px;
  background: linear-gradient(#aaa, #e8e8e8);
}
.option input:not(:checked) {
  background: linear-gradient(#f4f4f4, #bbb);
}
.option input:checked::after {
  content: '';
  position: absolute;
  left: 4px;
  top: 0;
  width: 4px;
  height: 9px;
  border: solid #111;
  border-width: 0 2px 1px 0;
  transform: rotate(36deg);
}
.scroll {
  position: absolute;
  right: 2px;
  top: 0;
  bottom: 0;
  width: 6px;
  background: #c6c6c6;
}
.thumb {
  height: 328px;
  border: 1px solid #777;
  border-radius: 3px;
  background: #999;
}
.palette-foot {
  height: 36px;
  display: flex;
  align-items: center;
  justify-content: flex-end;
  padding-right: 11px;
  border-top: 1px solid #ccc;
}
.palette-foot button {
  width: 82px;
  height: 20px;
  border: 1px solid #bbb;
  background: #ebebeb;
  color: #666;
  font-size: 12px;
}

/* marking menu */
.mark {
  position: absolute;
  width: 70px;
  height: 22px;
  gap: 10px;
  border: 1px solid #bbb;
  border-bottom-color: #888;
  border-radius: 3px;
  background: #f1f1f1;
  box-shadow: 0 1px 1px rgba(0, 0, 0, 0.2);
}
.m-repeat {
  left: 456px;
  top: 278px;
  width: 100px;
}
.m-delete {
  left: 412px;
  top: 309px;
  gap: 8px;
  background: #0a94d9;
  border-color: #0a84c4;
  color: #fff;
}
.m-undo {
  left: 392px;
  top: 337px;
}
.m-move {
  left: 382px;
  top: 365px;
  width: 100px;
}
.m-press {
  left: 530px;
  top: 309px;
  width: 90px;
}
.m-redo {
  left: 550px;
  top: 337px;
  opacity: 0.5;
  color: #888;
}
.m-hole {
  left: 530px;
  top: 365px;
  width: 60px;
  gap: 7px;
}
.m-sketch {
  left: 471px;
  top: 396px;
}

/* context menu */
.context {
  position: absolute;
  left: 430px;
  top: 105px;
  width: 152px;
  padding: 1px 1px 2px;
  border: 1px solid #ddd;
  border-radius: 3px;
  background: #fff;
  box-shadow: 0 1px 2px rgba(0, 0, 0, 0.2);
}
.context li {
  height: 17px;
}
.context .rule {
  height: 20px;
  margin-top: 2px;
  padding-top: 2px;
  border-top: 1px solid #bbb;
}
.context button {
  width: 100%;
  height: 17px;
  padding: 0 3px;
  gap: 6px;
  justify-content: flex-start;
}
.context .plain {
  padding-left: 25px;
}
.context kbd {
  margin-left: auto;
  font: inherit;
  color: #999;
}

/* bottom overlays */
.comments {
  position: absolute;
  left: 4px;
  bottom: 4px;
  width: 300px;
  border-top: 0;
  padding-left: 24px;
}
.navbar {
  position: absolute;
  left: 545px;
  bottom: 4px;
  height: 24px;
  display: flex;
  align-items: center;
  gap: 9px;
  padding: 0 5px 0 4px;
  background: #f1f1f1;
}
.navbar button {
  gap: 4px;
}
.navbar .caret {
  margin-right: -3px;
}
.status {
  position: absolute;
  right: 17px;
  bottom: 10px;
  font-weight: 700;
}
.timeline {
  height: 50px;
  display: flex;
  align-items: center;
  gap: 11px;
  padding: 0 13px 0 10px;
  background: #f1f1f1;
  border-top: 2px solid #ccc;
}
.features {
  margin-left: 10px;
}
.settings {
  margin-left: auto;
}

/* taskbar */
.taskbar {
  height: 40px;
  display: flex;
  background: linear-gradient(90deg, #20383f 30%, #1a2540);
  color: #fff;
  font-family: "Open Sans", "Noto Sans", sans-serif;
}
.start {
  width: 48px;
}
.search {
  width: 344px;
  display: flex;
  align-items: center;
  gap: 11px;
  padding-left: 11px;
  background: #f2f2f2;
  border: 1px solid #bbb;
}
.search input {
  flex: 1;
  min-width: 0;
  padding: 0;
  border: 0;
  background: none;
  font-family: inherit;
  font-size: 14px;
}
.search input::placeholder {
  color: #333;
}
.apps {
  flex: 1;
  display: flex;
  gap: 1px;
}
.apps button {
  width: 48px;
}
.apps .running {
  background: #4d5d68;
  border-bottom: 2px solid #76b9ed;
}
.tray {
  display: flex;
  align-items: center;
  gap: 12px;
}
.lang {
  font-size: 11px;
}
.clock {
  display: block;
  text-align: center;
  font-size: 11px;
  line-height: 18px;
}
.notes {
  width: 55px;
  height: 40px;
  margin: 0 4px 0 -12px;
  border-right: 1px solid #56607a;
}
```
